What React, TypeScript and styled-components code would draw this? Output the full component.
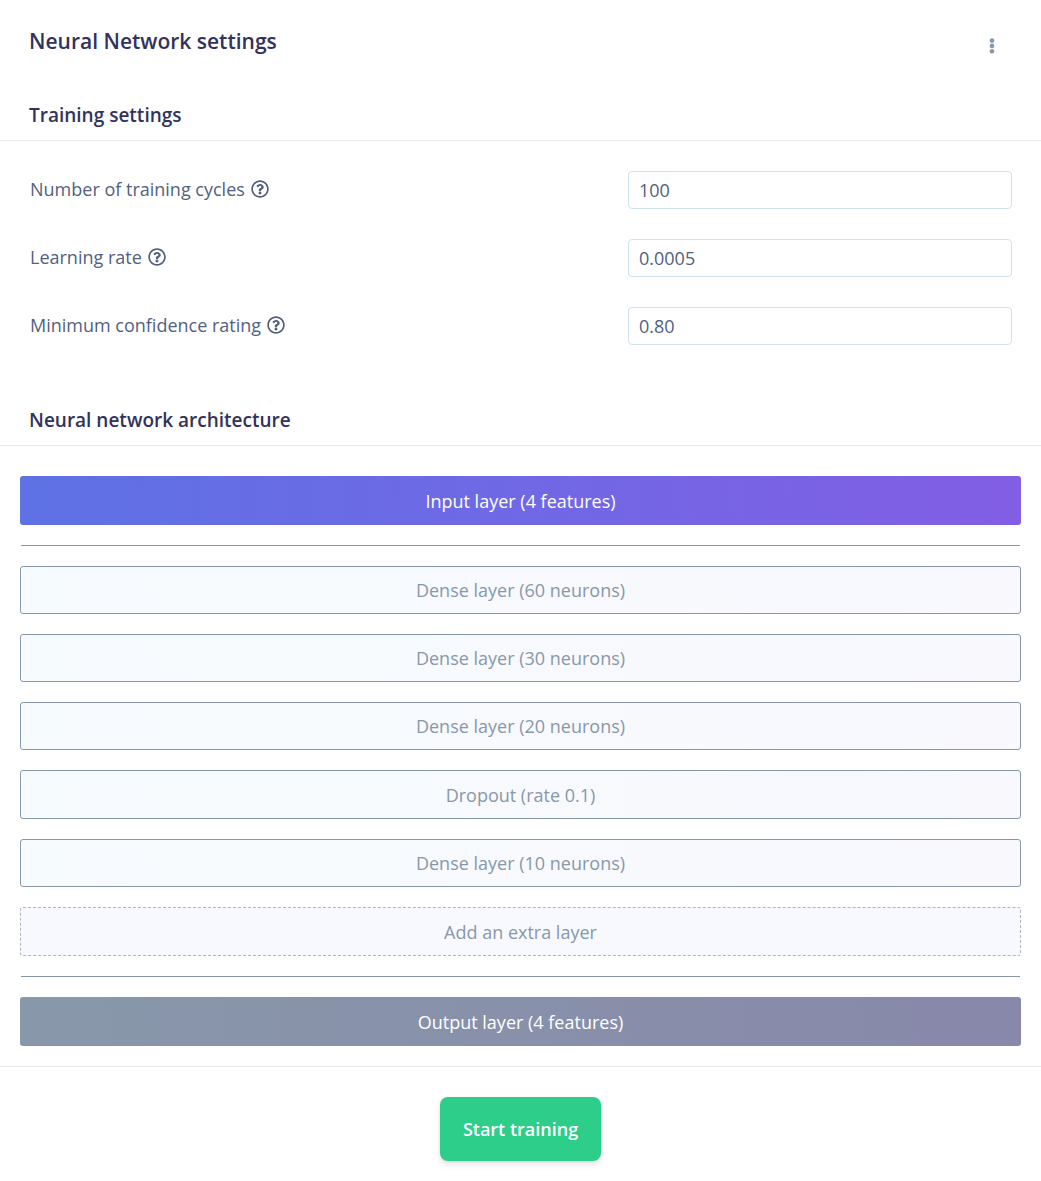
import React from "react";
import styled, { createGlobalStyle, css } from "styled-components";

const GlobalStyle = createGlobalStyle`
  *, *::before, *::after { box-sizing: border-box; }
  body {
    margin: 0;
    background: #fff;
    color: #525f7f;
    font-family: "Open Sans", "Noto Sans", sans-serif;
    font-size: 18px;
    line-height: 26px;
  }
`;

const Card = styled.main`
  background: #fff;
`;

const Header = styled.header`
  display: flex;
  align-items: center;
  justify-content: space-between;
  padding: 26px 29px 0;
`;

const Title = styled.h1`
  margin: 0;
  color: #32325d;
  font-size: 21px;
  font-weight: 600;
  line-height: 30px;
`;

const MenuButton = styled.button`
  display: flex;
  align-items: flex-end;
  justify-content: center;
  width: 40px;
  height: 30px;
  padding: 0 0 1px;
  border: 0;
  background: none;
  color: #8898aa;
  cursor: pointer;
`;

const SectionTitle = styled.h2<{ $gap: number }>`
  margin: 0;
  padding: ${(p) => p.$gap}px 29px 12px;
  border-bottom: 1px solid #e9ecef;
  color: #32325d;
  font-size: 19px;
  font-weight: 600;
  line-height: 26px;
`;

const Form = styled.form`
  display: block;
`;

const Fields = styled.div`
  display: grid;
  gap: 30px;
  padding: 30px 29px 0 30px;
`;

const Field = styled.div`
  display: grid;
  grid-template-columns: 598fr 384fr;
  align-items: start;
`;

const Label = styled.label`
  display: flex;
  align-items: center;
  gap: 6px;
  padding-top: 5px;
  font-weight: 500;
`;

const TextInput = styled.input`
  width: 100%;
  height: 38px;
  padding: 0 10px;
  border: 1px solid #cfe2ec;
  border-radius: 4px;
  background: #fff;
  color: #525f7f;
  font: inherit;
  outline: 0;
`;

const Layers = styled.div`
  display: flex;
  flex-direction: column;
  gap: 20px;
  padding: 30px 20px 20px;
`;

const looks = {
  input: css`
    height: 49px;
    color: #fff;
    font-weight: 500;
    background: linear-gradient(87deg, #5e72e4, #825ee4);
  `,
  dense: css`
    height: 48px;
    border: 1px solid #8898aa;
    color: #8898aa;
    background: linear-gradient(87deg, #f6fbfe, #f8f8fd);
  `,
  dropout: css`
    height: 49px;
    border: 1px solid #8898aa;
    color: #8898aa;
    background: linear-gradient(87deg, #f6fbfe, #f8f8fd);
  `,
  add: css`
    height: 49px;
    border: 1px dashed #adb5bd;
    color: #8898aa;
    background: #f8f9fe;
  `,
  output: css`
    height: 49px;
    color: #fff;
    font-weight: 500;
    background: linear-gradient(87deg, #8898aa, #8888aa);
  `,
};

const Layer = styled.button<{ $look: keyof typeof looks }>`
  padding: 0 20px;
  border: 0;
  border-radius: 3px;
  font: inherit;
  cursor: pointer;
  ${(p) => looks[p.$look]}
`;

const Rule = styled.hr`
  align-self: stretch;
  height: 1px;
  margin: 0 1px;
  border: 0;
  background: #8898aa;
`;

const Footer = styled.footer`
  display: flex;
  justify-content: center;
  padding: 30px 20px 20px;
  border-top: 1px solid #e9ecef;
`;

const StartButton = styled.button`
  height: 64px;
  padding: 0 23px;
  border: 0;
  border-radius: 8px;
  background: #2dce89;
  box-shadow: 0 4px 6px rgba(50, 50, 93, 0.11), 0 1px 3px rgba(0, 0, 0, 0.08);
  color: #fff;
  font: inherit;
  font-weight: 600;
  cursor: pointer;
`;

const HelpIcon = () => (
  <svg width="18" height="18" viewBox="0 0 512 512" fill="currentColor" aria-hidden="true">
    <path d="M256 8C119.043 8 8 119.083 8 256c0 136.997 111.043 248 248 248s248-111.003 248-248C504 119.083 392.957 8 256 8zm0 448c-110.532 0-200-89.431-200-200 0-110.495 89.472-200 200-200 110.491 0 200 89.471 200 200 0 110.53-89.431 200-200 200zm107.244-255.2c0 67.052-72.421 68.084-72.421 92.863V300c0 6.627-5.373 12-12 12h-45.647c-6.627 0-12-5.373-12-12v-8.659c0-35.745 27.1-50.034 47.579-61.516 17.561-9.845 28.324-16.541 28.324-29.579 0-17.246-21.999-28.693-39.784-28.693-23.189 0-33.894 10.977-48.942 29.969-4.057 5.12-11.46 6.071-16.666 2.124l-27.824-21.098c-5.107-3.872-6.251-11.066-2.644-16.363C184.846 131.491 214.94 112 261.794 112c49.071 0 101.45 38.304 101.45 88.8zM298 368c0 23.159-18.841 42-42 42s-42-18.841-42-42 18.841-42 42-42 42 18.841 42 42z" />
  </svg>
);

const DotsIcon = () => (
  <svg width="6" height="18" viewBox="0 0 6 18" fill="currentColor" aria-hidden="true">
    <circle cx="3" cy="3.6" r="2.3" />
    <circle cx="3" cy="8.9" r="2.3" />
    <circle cx="3" cy="14.2" r="2.3" />
  </svg>
);

const fields = [
  { id: "cycles", label: "Number of training cycles", value: "100" },
  { id: "rate", label: "Learning rate", value: "0.0005" },
  { id: "confidence", label: "Minimum confidence rating", value: "0.80" },
];

const hidden: { look: keyof typeof looks; text: string }[] = [
  { look: "dense", text: "Dense layer (60 neurons)" },
  { look: "dense", text: "Dense layer (30 neurons)" },
  { look: "dense", text: "Dense layer (20 neurons)" },
  { look: "dropout", text: "Dropout (rate 0.1)" },
  { look: "dense", text: "Dense layer (10 neurons)" },
  { look: "add", text: "Add an extra layer" },
];

export default function App() {
  return (
    <>
      <GlobalStyle />
      <Card>
        <Header>
          <Title>Neural Network settings</Title>
          <MenuButton type="button" aria-label="More options">
            <DotsIcon />
          </MenuButton>
        </Header>
        <Form onSubmit={(e) => e.preventDefault()}>
          <SectionTitle $gap={46}>Training settings</SectionTitle>
          <Fields>
            {fields.map((f) => (
              <Field key={f.id}>
                <Label htmlFor={f.id}>
                  {f.label}
                  <HelpIcon />
                </Label>
                <TextInput id={f.id} type="text" defaultValue={f.value} />
              </Field>
            ))}
          </Fields>
          <SectionTitle $gap={62}>Neural network architecture</SectionTitle>
          <Layers>
            <Layer type="button" $look="input">Input layer (4 features)</Layer>
            <Rule />
            {hidden.map((l) => (
              <Layer type="button" key={l.text} $look={l.look}>{l.text}</Layer>
            ))}
            <Rule />
            <Layer type="button" $look="output">Output layer (4 features)</Layer>
          </Layers>
          <Footer>
            <StartButton type="submit">Start training</StartButton>
          </Footer>
        </Form>
      </Card>
    </>
  );
}
